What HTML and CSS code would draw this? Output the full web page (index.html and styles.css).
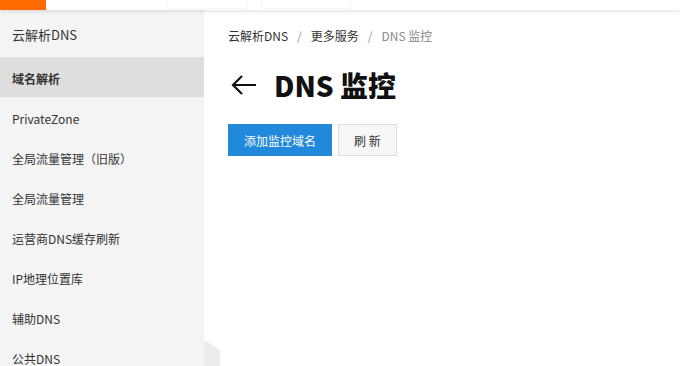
FILE: index.html
```html
<!DOCTYPE html>
<html>
<head>
<meta charset="utf-8">
<link rel="stylesheet" href="styles.css">
</head>
<body>
<header class="topbar">
  <div class="logo"></div>
  <div class="tab tab-a"></div>
  <div class="tab tab-b"></div>
</header>
<div class="layout">
  <aside class="sidebar">
    <div class="side-title">云解析DNS</div>
    <ul class="menu">
      <li class="item active">域名解析</li>
      <li class="item">PrivateZone</li>
      <li class="item">全局流量管理（旧版）</li>
      <li class="item">全局流量管理</li>
      <li class="item">运营商DNS缓存刷新</li>
      <li class="item">IP地理位置库</li>
      <li class="item">辅助DNS</li>
      <li class="item">公共DNS</li>
    </ul>
    <div class="collapse"></div>
  </aside>
  <main class="content">
    <nav class="crumbs">
      <span>云解析DNS</span><span class="sep">/</span><span>更多服务</span><span class="sep">/</span><span class="current">DNS 监控</span>
    </nav>
    <div class="heading">
      <svg class="back" width="26" height="22" viewBox="0 0 26 22"><path d="M25 11H2M11 2L2 11l9 9" fill="none" stroke="#111" stroke-width="2.2"/></svg>
      <h1>DNS 监控</h1>
    </div>
    <div class="actions">
      <button class="btn primary">添加监控域名</button>
      <button class="btn">刷 新</button>
    </div>
  </main>
</div>
</body>
</html>
```
FILE: styles.css
```css
* { box-sizing: border-box; }
html, body { margin: 0; padding: 0; height: 100%; overflow: hidden; }
body {
  font-family: "Noto Sans CJK SC", "Noto Sans", sans-serif;
  font-size: 12px;
  color: #333;
  background: #fff;
}
.topbar {
  height: 10px;
  background: #fff;
  display: flex;
  position: relative;
  z-index: 2;
  box-shadow: 0 1px 4px rgba(0,0,0,0.14);
}
.logo { width: 46px; height: 10px; background: #ff6a00; }
.tab { height: 9px; border: 1px solid #f6f6f6; border-top: 0; border-radius: 0 0 2px 2px; }
.tab-a { margin-left: 121px; width: 81px; }
.tab-b { margin-left: 13px; width: 90px; }
.layout { display: flex; height: 356px; }
.sidebar {
  width: 204px;
  background: #f4f4f4;
  position: relative;
  flex-shrink: 0;
}
.side-title {
  height: 47px;
  line-height: 50px;
  padding-left: 12px;
  font-size: 13px;
  color: #333;
}
.menu { list-style: none; margin: 0; padding: 0; }
.item {
  height: 40px;
  line-height: 44px;
  padding-left: 12px;
  font-size: 12px;
  color: #333;
}
.item.active { background: #dedede; font-weight: bold; }
.collapse {
  position: absolute;
  left: 204px;
  top: 330px;
  width: 16px;
  height: 30px;
  background: #ececec;
  clip-path: polygon(0 0, 100% 10px, 100% 100%, 0 100%);
}
.content { padding: 16px 24px; flex: 1; }
.crumbs { height: 20px; line-height: 20px; font-size: 12px; color: #333; }
.crumbs .sep { color: #999; margin: 0 9px; }
.crumbs .current { color: #888; }
.heading {
  display: flex;
  align-items: center;
  margin-top: 24px;
  height: 30px;
}
.back { margin-left: 3px; margin-right: 17px; }
.heading h1 {
  margin: 0;
  font-size: 28px;
  font-weight: 900;
  color: #111;
  line-height: 30px;
}
.actions { display: flex; gap: 6px; margin-top: 24px; }
.btn {
  height: 32px;
  border: 1px solid #ddd;
  background: #f7f7f7;
  color: #333;
  font-family: inherit;
  font-size: 12px;
  padding: 0 15px;
  border-radius: 0;
}
.btn.primary {
  width: 104px;
  background: #2189db;
  border-color: #2189db;
  color: #fff;
}
```
